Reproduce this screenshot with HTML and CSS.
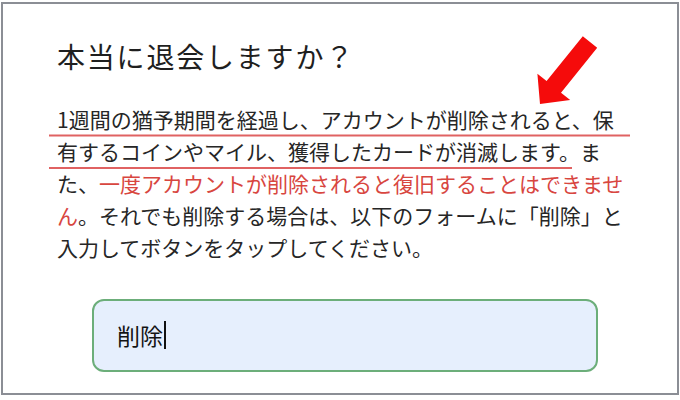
FILE: index.html
```html
<!DOCTYPE html>
<html lang="ja">
<head>
<meta charset="utf-8">
<title>退会</title>
<link rel="stylesheet" href="styles.css">
</head>
<body>
<div class="frame">
  <h1 class="title">本当に退会しますか？</h1>
  <p class="desc">1週間の猶予期間を経過し、アカウントが削除されると、保有するコインやマイル、獲得したカードが消滅します。また、<span class="warn">一度アカウントが削除されると復旧することはできません</span>。それでも削除する場合は、以下のフォームに「削除」と入力してボタンをタップしてください。</p>
  <div class="field"><span class="value">削除</span><span class="caret"></span></div>
</div>
<svg class="annot" width="680" height="400" viewBox="0 0 680 400" aria-hidden="true">
  <line x1="49" y1="135.5" x2="630" y2="135.5" class="mark"/>
  <line x1="49" y1="168" x2="572" y2="168" class="mark"/>
  <polygon class="arrow" points="582.8,36.2 597.2,47.8 561,92.7 570.2,100.1 540,104 537.4,73.7 546.6,81.1"/>
</svg>
</body>
</html>
```

FILE: styles.css
```css
html, body {
  margin: 0;
  padding: 0;
  background: #ffffff;
}

body {
  position: relative;
  width: 680px;
  height: 400px;
  overflow: hidden;
  font-family: "Noto Sans CJK JP", "Noto Sans", sans-serif;
  color: #262626;
}

.frame {
  box-sizing: border-box;
  width: 678px;
  height: 393px;
  margin: 2px 0 0 1px;
  border: 2px solid #8b8e95;
  padding: 35px 48px 0 54px;
  background: #ffffff;
}

.title {
  margin: 0;
  font-size: 28px;
  line-height: 34px;
  font-weight: 400;
  letter-spacing: 1.8px;
  color: #1f1f1f;
}

.desc {
  margin: 30px 0 0 0;
  width: 572px;
  font-size: 21px;
  line-height: 32px;
  color: #262626;
}

.warn {
  color: #d8463f;
}

.field {
  box-sizing: border-box;
  display: flex;
  align-items: center;
  width: 506px;
  height: 73px;
  margin: 36px 0 0 35px;
  padding: 0 0 2px 23px;
  border: 2px solid #6cae7a;
  border-radius: 12px;
  background: #e6effd;
}

.value {
  font-size: 23px;
  color: #141414;
  line-height: 30px;
}

.caret {
  display: block;
  width: 2px;
  height: 28px;
  margin-left: 1px;
  background: #111111;
}

.annot {
  position: absolute;
  left: 0;
  top: 0;
  pointer-events: none;
}

.mark {
  stroke: #e06262;
  stroke-width: 1.8;
}

.arrow {
  fill: #f50b0b;
}
```
